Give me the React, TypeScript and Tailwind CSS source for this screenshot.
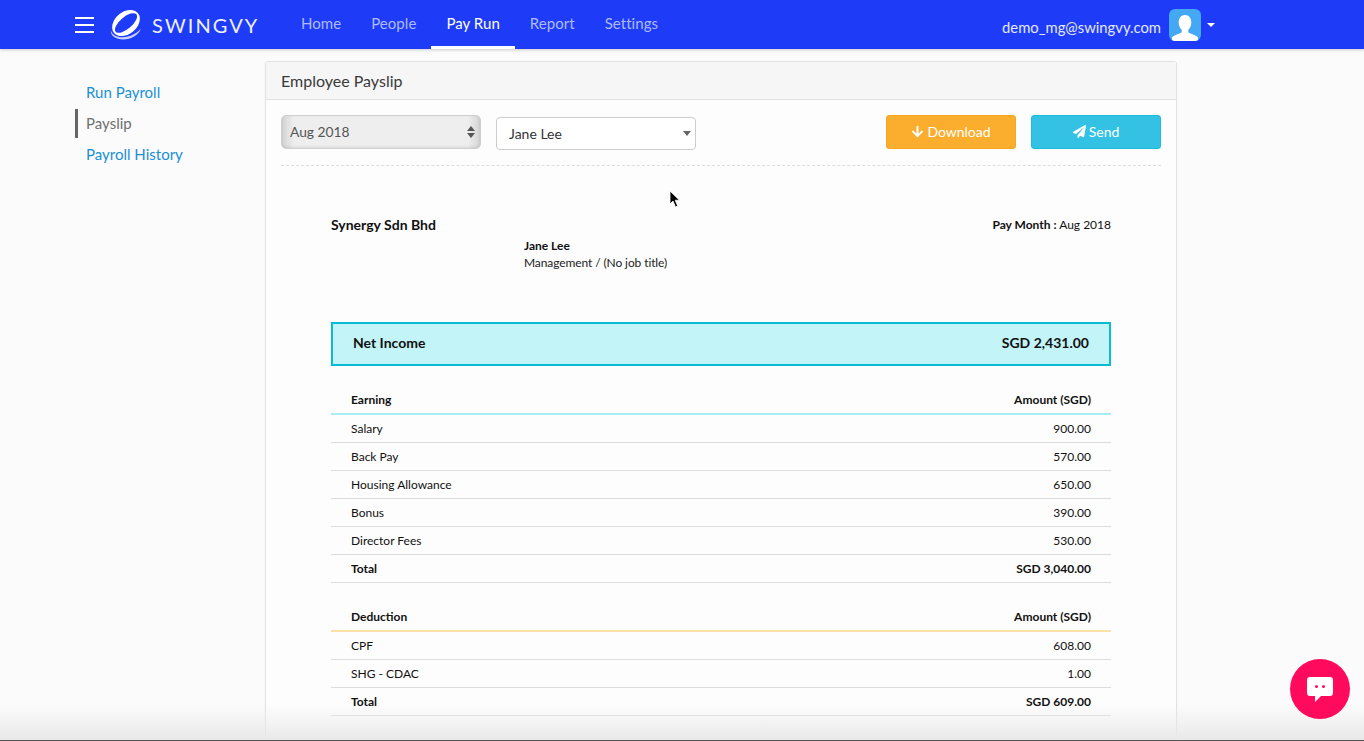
import { FaArrowDown, FaPaperPlane } from "react-icons/fa"

const navItems = ["Home", "People", "Pay Run", "Report", "Settings"]

const earnings = [
  ["Salary", "900.00"],
  ["Back Pay", "570.00"],
  ["Housing Allowance", "650.00"],
  ["Bonus", "390.00"],
  ["Director Fees", "530.00"],
]

const deductions = [
  ["CPF", "608.00"],
  ["SHG - CDAC", "1.00"],
]

function Logo() {
  return (
    <svg width="32" height="30" viewBox="0 0 32 30" fill="none">
      <path
        d="M.8 20.500c1.500 4.500 6 7 12 6.800 6.500-.2 13-3.300 18-8.300-2.500 6-9.500 10.500-17.500 10.500C6 29.500.5 26 .8 20.500z"
        fill="#c9d2fb"
      />
      <g transform="translate(16 13) rotate(-40)">
        <path
          d="M-15.500 0a15.500 11 0 1 0 31 0a15.500 11 0 1 0-31 0zM-13.500 0a13.500 6 0 1 0 27 0a13.500 6 0 1 0-27 0z"
          fill="#fff"
          fillRule="evenodd"
        />
      </g>
    </svg>
  )
}

function PayTable({
  title,
  rows,
  total,
  lineClass,
}: {
  title: string
  rows: string[][]
  total: string
  lineClass: string
}) {
  return (
    <div className="text-[12px] leading-[16px] text-[#111]">
      <div className={`flex h-[29px] items-center justify-between border-b-2 px-5 font-bold ${lineClass}`}>
        <span>{title}</span>
        <span>Amount (SGD)</span>
      </div>
      {rows.map(([label, amount]) => (
        <div key={label} className="flex h-[28px] items-center justify-between border-b border-[#dddddd] px-5 pt-[1px]">
          <span>{label}</span>
          <span>{amount}</span>
        </div>
      ))}
      <div className="flex h-[28px] items-center justify-between border-b border-[#dddddd] px-5 pt-[1px] font-bold">
        <span>Total</span>
        <span>{total}</span>
      </div>
    </div>
  )
}

export default function App() {
  return (
    <div className="relative h-[741px] overflow-hidden bg-[#fbfbfb] font-['Lato',_'Open_Sans',_sans-serif] text-[#333]">
      <header className="flex h-[49px] items-stretch bg-[#1e3cf8] shadow-[0_1px_3px_rgba(0,0,0,0.2)]">
        <div className="ml-[75px] flex w-[19px] flex-col justify-center gap-[5px]">
          <span className="h-[2px] bg-white" />
          <span className="h-[2px] bg-white" />
          <span className="h-[2px] bg-white" />
        </div>
        <div className="ml-[16px] flex w-[176px] items-center gap-[10px]">
          <Logo />
          <span className="text-[20px] leading-none tracking-[2.1px] text-[#eef0ff]">SWINGVY</span>
        </div>
        <nav className="flex text-[15px] tracking-[0.05px]">
          {navItems.map((item) => (
            <a
              key={item}
              className={`flex items-center border-b-[3px] px-[15px] ${
                item === "Pay Run" ? "border-white text-white" : "border-transparent text-[#aebafc]"
              }`}
            >
              {item}
            </a>
          ))}
        </nav>
        <div className="ml-auto mr-[149px] flex items-center">
          <span className="pt-[6px] text-[14.8px] text-[#e3e7ff]">demo_mg@swingvy.com</span>
          <div className="ml-[8px] flex h-[32px] w-[32px] items-end justify-center overflow-hidden rounded-[6px] bg-[#45a8f2]">
            <svg width="30" height="28" viewBox="0 0 30 28" fill="#fff">
              <path d="M15 2c4 0 6.300 3 6.300 7.500 0 3-1.300 5.800-3 7.200v2.300c0 1.200 6.700 2.200 9.700 5.500V28H2v-3.500c3-3.300 9.700-4.300 9.700-5.500v-2.300c-1.700-1.400-3-4.200-3-7.200C8.700 5 11 2 15 2z" />
            </svg>
          </div>
          <span className="ml-[6px] h-0 w-0 border-x-[4px] border-t-[4px] border-x-transparent border-t-white" />
        </div>
      </header>

      <div className="flex items-start pt-[12px]">
        <aside className="ml-[75px] w-[190px] pt-[16px] text-[15px]">
          <a className="block h-[32px] pl-[11px] leading-[31px] text-[#1a8fd6]">Run Payroll</a>
          <a className="block h-[29px] border-l-[3px] border-[#666] pl-[8px] leading-[29px] text-[#707070]">
            Payslip
          </a>
          <a className="block h-[31px] pl-[11px] leading-[33px] text-[#1a8fd6]">Payroll History</a>
        </aside>

        <main className="h-[700px] w-[912px] rounded-t-[3px] border border-[#e2e2e2] bg-[#fdfdfd] shadow-[0_1px_2px_rgba(0,0,0,0.05)]">
          <div className="flex h-[38px] items-center border-b border-[#e2e2e2] bg-[#f6f6f6] px-[15px] pt-[1px] text-[16px] text-[#3a3a3a]">
            Employee Payslip
          </div>

          <div className="px-[15px]">
            <div className="flex items-start border-b border-dashed border-[#dddddd] pb-[15px] pt-[15px]">
              <div className="flex h-[34px] w-[200px] items-center justify-between rounded-[5px] border border-[#cfcfcf] bg-[linear-gradient(to_right,#d4d4d4,#eeeeee_6%,#eeeeee_94%,#d4d4d4)] pl-[8px] pr-[5px] text-[13.8px] text-[#555] shadow-[inset_0_-1px_3px_rgba(0,0,0,0.1)]">
                <span>Aug 2018</span>
                <span className="flex flex-col gap-[2px]">
                  <span className="h-0 w-0 border-x-[4px] border-b-[5px] border-x-transparent border-b-[#555]" />
                  <span className="h-0 w-0 border-x-[4px] border-t-[5px] border-x-transparent border-t-[#555]" />
                </span>
              </div>
              <div className="ml-[15px] mt-[2px] flex h-[33px] w-[200px] items-center justify-between rounded-[4px] border border-[#cccccc] bg-white pl-[12px] pr-[4px] text-[14px] text-[#333]">
                <span>Jane Lee</span>
                <span className="h-0 w-0 border-x-[4px] border-t-[5px] border-x-transparent border-t-[#666]" />
              </div>
              <button className="ml-auto flex h-[34px] w-[130px] items-center justify-center gap-[3px] rounded-[3px] border border-[#f5a623] bg-[#fbae2d] pb-[1px] text-[14px] text-white">
                <FaArrowDown className="h-[13px] w-[13px]" />
                Download
              </button>
              <button className="ml-[15px] flex h-[34px] w-[130px] items-center justify-center gap-[3px] rounded-[3px] border border-[#1fbcdc] bg-[#33c2e3] pb-[1px] text-[14px] text-white">
                <FaPaperPlane className="h-[13px] w-[13px]" />
                Send
              </button>
            </div>

            <div className="px-[50px] pt-[49px]">
              <div className="flex items-start justify-between">
                <span className="text-[14px] font-bold leading-[20px] text-[#111]">Synergy Sdn Bhd</span>
                <span className="mt-[1px] text-[12px] leading-[18px] text-[#111]">
                  <b>Pay Month :</b> Aug 2018
                </span>
              </div>
              <div className="mt-[2px] pl-[193px] text-[12px] leading-[17px] text-[#222]">
                <div className="font-bold text-[#111]">Jane Lee</div>
                <div className="tracking-[-0.1px]">Management / (No job title)</div>
              </div>

              <div className="mt-[51px] flex h-[44px] items-center justify-between border-2 border-[#08bcd6] bg-[#c3f4f8] px-5 pb-[3px] text-[14px] font-bold text-[#111]">
                <span>Net Income</span>
                <span>SGD 2,431.00</span>
              </div>

              <div className="mt-[20px]">
                <PayTable title="Earning" rows={earnings} total="SGD 3,040.00" lineClass="border-[#a9edf4]" />
              </div>
              <div className="mt-[20px]">
                <PayTable title="Deduction" rows={deductions} total="SGD 609.00" lineClass="border-[#fbe0a8]" />
              </div>
            </div>
          </div>
        </main>
      </div>

      {/* fade and edge along the bottom of the window */}
      <div className="pointer-events-none absolute inset-x-0 bottom-0 h-[36px] border-b border-[#555] bg-gradient-to-b from-transparent to-[#e9e9e9]" />

      {/* mouse pointer */}
      <svg className="absolute left-[669px] top-[190px]" width="12" height="19" viewBox="0 0 12 19">
        <path d="M1 1v13l3-3 2.500 6 2.200-1-2.500-5.800H10.500z" fill="#000" stroke="#fff" strokeWidth="0.8" />
      </svg>

      {/* chat launcher */}
      <button className="absolute left-[1290px] top-[659px] flex h-[60px] w-[60px] items-center justify-center rounded-full bg-[#ff0a5c]">
        <svg width="26" height="25" viewBox="0 0 26 25">
          <path
            d="M3 0h20a3 3 0 0 1 3 3v13a3 3 0 0 1-3 3H14l-6 6v-6H3a3 3 0 0 1-3-3V3a3 3 0 0 1 3-3z"
            fill="#fff"
          />
          <circle cx="9.500" cy="9.500" r="1.500" fill="#ff0a5c" />
          <circle cx="16.500" cy="9.500" r="1.500" fill="#ff0a5c" />
        </svg>
      </button>
    </div>
  )
}
